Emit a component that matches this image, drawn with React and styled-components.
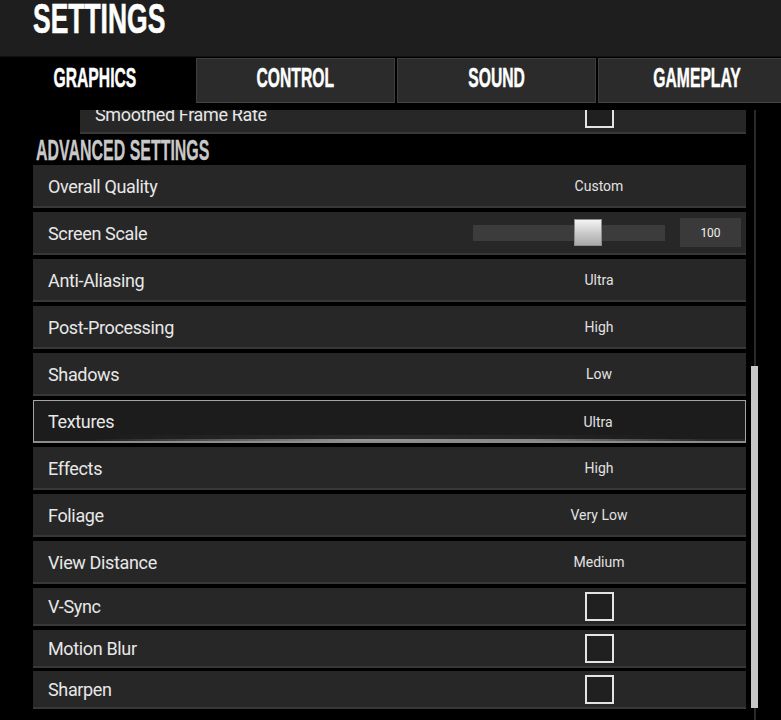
import React from "react";
import styled, { createGlobalStyle, css } from "styled-components";

const GlobalStyle = createGlobalStyle`
  html, body {
    margin: 0;
    padding: 0;
    background: #000;
    overflow: hidden;
  }
`;

const Page = styled.div`
  width: 781px;
  height: 720px;
  overflow: hidden;
  background: #000;
  display: flex;
  flex-direction: column;
  font-family: Roboto, "Liberation Sans", sans-serif;
`;

const Header = styled.header`
  height: 57px;
  box-sizing: border-box;
  background: #1e1e1e;
  border-bottom: 1px solid #111;
  padding-left: 33px;
  padding-top: 1px;
`;

// the game uses a very narrow display face, so a bold sans is squeezed sideways
const Squeeze = styled.span`
  display: inline-block;
  transform: scaleX(${(p) => p.$scale});
  transform-origin: ${(p) => p.$origin || "center"};
  white-space: nowrap;
`;

const Title = styled.h1`
  margin: 0;
  font-family: "Liberation Sans", Arial, sans-serif;
  font-weight: 700;
  font-size: 42px;
  line-height: 36px;
  color: #fff;
  -webkit-text-stroke: 0.6px #fff;
`;

const TabBar = styled.nav`
  height: 46px;
  display: flex;
  align-items: flex-end;
  gap: 2px;
  margin-left: -5px;
  overflow: hidden;
  background: #000;
`;

const Tab = styled.div`
  flex: 0 0 199px;
  height: 45px;
  box-sizing: border-box;
  display: flex;
  align-items: center;
  justify-content: center;
  padding-bottom: 6px;
  font-family: "Liberation Sans", Arial, sans-serif;
  font-weight: 700;
  font-size: 28px;
  color: #fff;
  -webkit-text-stroke: 0.5px #fff;
  background: #2b2b2b;
  border: 1px solid #3e3e3e;
  border-bottom-color: #454545;
  ${(p) =>
    p.$active &&
    css`
      background: #000;
      border-color: #000;
    `}
`;

const Main = styled.main`
  flex: 1;
  display: flex;
  gap: 5px;
  padding: 7px 0 0 33px;
  overflow: hidden;
`;

const List = styled.div`
  width: 713px;
  display: flex;
  flex-direction: column;
  overflow: hidden;
`;

const SectionTitle = styled.h2`
  flex: 0 0 auto;
  margin: 0;
  height: 27px;
  padding-left: 3px;
  font-family: "Liberation Sans", Arial, sans-serif;
  font-weight: 700;
  font-size: 29px;
  line-height: 24px;
  color: #c8c8c8;
  -webkit-text-stroke: 0.3px #c8c8c8;
`;

const Row = styled.div`
  flex: 0 0 auto;
  display: grid;
  grid-template-columns: 1fr 294px;
  align-items: center;
  height: ${(p) => (p.$compact ? 38 : 43)}px;
  box-sizing: border-box;
  margin-bottom: ${(p) => (p.$compact ? 3.5 : 4)}px;
  margin-left: ${(p) => (p.$indent ? 47 : 0)}px;
  margin-top: ${(p) => p.$offset || 0}px;
  padding-left: 15px;
  background: #272727;
  border-bottom: 2px solid #383838;
  ${(p) =>
    p.$selected &&
    css`
      padding-left: 14px;
      border: 1px solid #a4a4a4;
      border-bottom: 2px solid #8c8c8c;
      background: linear-gradient(
          90deg,
          rgba(255, 255, 255, 0) 8%,
          rgba(255, 255, 255, 0.5) 45%,
          rgba(255, 255, 255, 0.45) 70%,
          rgba(255, 255, 255, 0.05) 95%
        )
          bottom / 100% 2px no-repeat,
        linear-gradient(
            90deg,
            rgba(255, 255, 255, 0) 10%,
            rgba(255, 255, 255, 0.07) 50%,
            rgba(255, 255, 255, 0) 90%
          )
          bottom / 100% 6px no-repeat,
        #1c1c1c;
    `}
`;

const Label = styled.span`
  font-size: 18px;
  letter-spacing: -0.35px;
  color: #e8e8e8;
  padding-top: ${(p) => (p.$low ? 5 : 1)}px;
  white-space: nowrap;
`;

const Value = styled.div`
  display: flex;
  justify-content: center;
  align-items: center;
  font-size: 14px;
  color: #e2e2e2;
  padding-top: ${(p) => (p.$low ? 4 : 1)}px;
`;

const SliderCell = styled.div`
  display: flex;
  justify-content: flex-end;
  align-items: center;
  gap: 15px;
  padding-right: 5px;
`;

const Track = styled.div`
  position: relative;
  width: 192px;
  height: 16px;
  background: #3c3c3c;
`;

const Thumb = styled.div`
  position: absolute;
  top: -6px;
  width: 28px;
  height: 27px;
  box-sizing: border-box;
  border: 1px solid #8e8e8e;
  background: linear-gradient(#f4f4f4, #c4c4c4 60%, #a9a9a9);
`;

const NumberBox = styled.div`
  width: 61px;
  height: 29px;
  display: flex;
  align-items: center;
  justify-content: center;
  background: #3a3a3a;
  font-size: 12px;
  color: #f0f0f0;
`;

const Checkbox = styled.div`
  width: 29px;
  height: 29px;
  box-sizing: border-box;
  border: 2px solid #e4e4e4;
  background: #202020;
`;

const ScrollTrack = styled.div`
  width: 7px;
  display: flex;
  flex-direction: column;
  background: linear-gradient(
    90deg,
    transparent 3px,
    #2a2a2a 3px,
    #2a2a2a 5px,
    transparent 5px
  );
`;

const ScrollThumb = styled.div`
  margin-top: 256px;
  height: 342px;
  background: #c6c6c6;
`;

const tabs = ["GRAPHICS", "CONTROL", "SOUND", "GAMEPLAY"];

const scale = { value: 100, min: 20, max: 150 };

const options = [
  { label: "Overall Quality", value: "Custom" },
  { label: "Screen Scale", slider: true },
  { label: "Anti-Aliasing", value: "Ultra" },
  { label: "Post-Processing", value: "High" },
  { label: "Shadows", value: "Low" },
  { label: "Textures", value: "Ultra", selected: true },
  { label: "Effects", value: "High" },
  { label: "Foliage", value: "Very Low" },
  { label: "View Distance", value: "Medium" },
];

const toggles = ["V-Sync", "Motion Blur", "Sharpen"];

function ScaleSlider() {
  const pos = (scale.value - scale.min) / (scale.max - scale.min);
  return (
    <SliderCell>
      <Track>
        <Thumb style={{ left: `${pos * (192 - 28)}px` }} />
      </Track>
      <NumberBox>{scale.value}</NumberBox>
    </SliderCell>
  );
}

export default function App() {
  return (
    <Page>
      <GlobalStyle />
      <Header>
        <Title>
          <Squeeze $scale={0.63} $origin="left">
            SETTINGS
          </Squeeze>
        </Title>
      </Header>
      <TabBar>
        {tabs.map((t, i) => (
          <Tab key={t} $active={i === 0}>
            <Squeeze $scale={0.56}>{t}</Squeeze>
          </Tab>
        ))}
      </TabBar>
      <Main>
        <List>
          {/* row scrolled half out of view */}
          <Row $indent $offset={-19}>
            <Label $low>Smoothed Frame Rate</Label>
            <Value $low>
              <Checkbox />
            </Value>
          </Row>
          <SectionTitle>
            <Squeeze $scale={0.55} $origin="left">
              ADVANCED SETTINGS
            </Squeeze>
          </SectionTitle>
          {options.map((o) => (
            <Row key={o.label} $selected={o.selected}>
              <Label>{o.label}</Label>
              {o.slider ? <ScaleSlider /> : <Value>{o.value}</Value>}
            </Row>
          ))}
          {toggles.map((t) => (
            <Row key={t} $compact>
              <Label>{t}</Label>
              <Value>
                <Checkbox />
              </Value>
            </Row>
          ))}
        </List>
        <ScrollTrack>
          <ScrollThumb />
        </ScrollTrack>
      </Main>
    </Page>
  );
}
